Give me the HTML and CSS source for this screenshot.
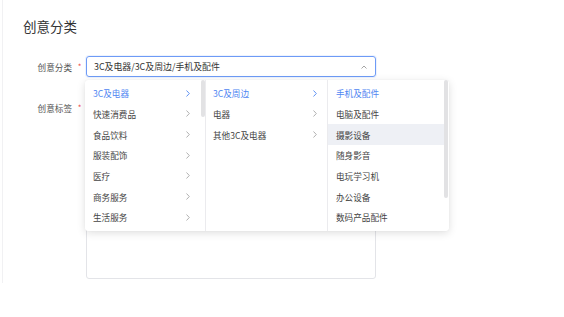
FILE: index.html
```html
<!DOCTYPE html>
<html lang="zh-CN">
<head>
<meta charset="utf-8">
<title>创意分类</title>
<link rel="stylesheet" href="styles.css">
</head>
<body>
<div class="page">
  <h1 class="title">创意分类</h1>
  <div class="form">
    <div class="row">
      <label class="label">创意分类</label>
      <span class="star">*</span>
      <div class="control">
        <div class="select">
          <span class="select-text">3C及电器/3C及周边/手机及配件</span>
          <svg class="arrow-up" width="6" height="4" viewBox="0 0 6 4"><polyline points="0.5,3.5 3,1 5.5,3.5" fill="none" stroke="#9a9a9a" stroke-width="0.9"/></svg>
        </div>
        <div class="cascader">
          <div class="col">
            <ul class="list">
              <li class="item active"><span>3C及电器</span><svg class="chev" width="4" height="7" viewBox="0 0 4 7"><polyline points="0.5,0.5 3.3,3.5 0.5,6.5" fill="none" stroke="currentColor" stroke-width="0.9"/></svg></li>
              <li class="item"><span>快速消费品</span><svg class="chev" width="4" height="7" viewBox="0 0 4 7"><polyline points="0.5,0.5 3.3,3.5 0.5,6.5" fill="none" stroke="currentColor" stroke-width="0.9"/></svg></li>
              <li class="item"><span>食品饮料</span><svg class="chev" width="4" height="7" viewBox="0 0 4 7"><polyline points="0.5,0.5 3.3,3.5 0.5,6.5" fill="none" stroke="currentColor" stroke-width="0.9"/></svg></li>
              <li class="item"><span>服装配饰</span><svg class="chev" width="4" height="7" viewBox="0 0 4 7"><polyline points="0.5,0.5 3.3,3.5 0.5,6.5" fill="none" stroke="currentColor" stroke-width="0.9"/></svg></li>
              <li class="item"><span>医疗</span><svg class="chev" width="4" height="7" viewBox="0 0 4 7"><polyline points="0.5,0.5 3.3,3.5 0.5,6.5" fill="none" stroke="currentColor" stroke-width="0.9"/></svg></li>
              <li class="item"><span>商务服务</span><svg class="chev" width="4" height="7" viewBox="0 0 4 7"><polyline points="0.5,0.5 3.3,3.5 0.5,6.5" fill="none" stroke="currentColor" stroke-width="0.9"/></svg></li>
              <li class="item"><span>生活服务</span><svg class="chev" width="4" height="7" viewBox="0 0 4 7"><polyline points="0.5,0.5 3.3,3.5 0.5,6.5" fill="none" stroke="currentColor" stroke-width="0.9"/></svg></li>
            </ul>
            <div class="thumb thumb-1"></div>
          </div>
          <div class="col col-2">
            <ul class="list">
              <li class="item active"><span>3C及周边</span><svg class="chev" width="4" height="7" viewBox="0 0 4 7"><polyline points="0.5,0.5 3.3,3.5 0.5,6.5" fill="none" stroke="currentColor" stroke-width="0.9"/></svg></li>
              <li class="item"><span>电器</span><svg class="chev" width="4" height="7" viewBox="0 0 4 7"><polyline points="0.5,0.5 3.3,3.5 0.5,6.5" fill="none" stroke="currentColor" stroke-width="0.9"/></svg></li>
              <li class="item"><span>其他3C及电器</span><svg class="chev" width="4" height="7" viewBox="0 0 4 7"><polyline points="0.5,0.5 3.3,3.5 0.5,6.5" fill="none" stroke="currentColor" stroke-width="0.9"/></svg></li>
            </ul>
          </div>
          <div class="col col-3">
            <ul class="list">
              <li class="item active"><span>手机及配件</span></li>
              <li class="item"><span>电脑及配件</span></li>
              <li class="item hover"><span>摄影设备</span></li>
              <li class="item"><span>随身影音</span></li>
              <li class="item"><span>电玩学习机</span></li>
              <li class="item"><span>办公设备</span></li>
              <li class="item"><span>数码产品配件</span></li>
            </ul>
            <div class="thumb thumb-3"></div>
          </div>
        </div>
      </div>
    </div>
    <div class="row row-top">
      <label class="label">创意标签</label>
      <span class="star">*</span>
      <div class="control">
        <div class="textarea"></div>
      </div>
    </div>
  </div>
</div>
</body>
</html>
```

FILE: styles.css
```css
* { box-sizing: border-box; }
html, body { margin: 0; padding: 0; background: #fff; }
body {
  font-family: "Noto Sans CJK SC", "Noto Sans", sans-serif;
  color: #333;
}
.page {
  margin-left: 2px;
  border-left: 1px solid #f1f1f3;
  height: 283px;
  padding: 17px 0 0 20px;
}
.title {
  margin: 0;
  font-size: 13.5px;
  font-weight: 400;
  line-height: 19px;
  height: 19px;
  color: #333;
}
.form { margin-top: 20px; }
.row {
  display: flex;
  align-items: center;
}
.row-top { align-items: flex-start; margin-top: 21px; }
.label {
  width: 49px;
  text-align: right;
  font-size: 8.6px;
  line-height: 20px;
  color: #555;
}
.star {
  width: 14px;
  text-align: center;
  color: #f04b4b;
  font-size: 8px;
  line-height: 20px;
  padding-left: 1px;
}
.control { position: relative; }
.select {
  width: 290px;
  height: 21px;
  border: 1px solid #6e9bf6;
  border-radius: 3px;
  display: flex;
  align-items: center;
  justify-content: space-between;
  padding: 0 8px 0 7px;
  box-shadow: 0 0 0 1px rgba(110, 155, 246, 0.12);
}
.select-text {
  font-size: 8.9px;
  color: #333;
  white-space: nowrap;
}
.arrow-up { display: block; }
.textarea {
  width: 290px;
  height: 181px;
  border: 1px solid #e3e4e8;
  border-radius: 3px;
}
.cascader {
  position: absolute;
  left: -1px;
  top: 24px;
  width: 364px;
  height: 151px;
  background: #fff;
  border-radius: 3px;
  box-shadow: 0 2px 8px rgba(0, 0, 0, 0.13), 0 0 1px rgba(0, 0, 0, 0.08);
  display: grid;
  grid-template-columns: 121px 122px 1fr;
  z-index: 10;
}
.col {
  position: relative;
  border-right: 1px solid #ebebee;
  padding: 3px 0;
}
.col-3 { border-right: 0; padding-right: 5px; }
.list { list-style: none; margin: 0; padding: 0; }
.item {
  height: 20.67px;
  display: flex;
  align-items: center;
  justify-content: space-between;
  padding: 0 15px 0 8px;
  font-size: 8.6px;
  color: #444;
  white-space: nowrap;
}
.col-2 .item { padding: 0 10px 0 7px; }
.item .chev { color: #a8a8a8; display: block; }
.item.active { color: #4e86f2; }
.item.active .chev { color: #4e86f2; }
.item.hover { background: #eef0f5; }
.thumb {
  position: absolute;
  right: 0;
  width: 4.5px;
  background: #e2e2e4;
  border-radius: 2px;
}
.thumb-1 { top: 0; height: 37px; right: 0; }
.thumb-3 { top: 0; height: 118px; right: 1px; }
```
